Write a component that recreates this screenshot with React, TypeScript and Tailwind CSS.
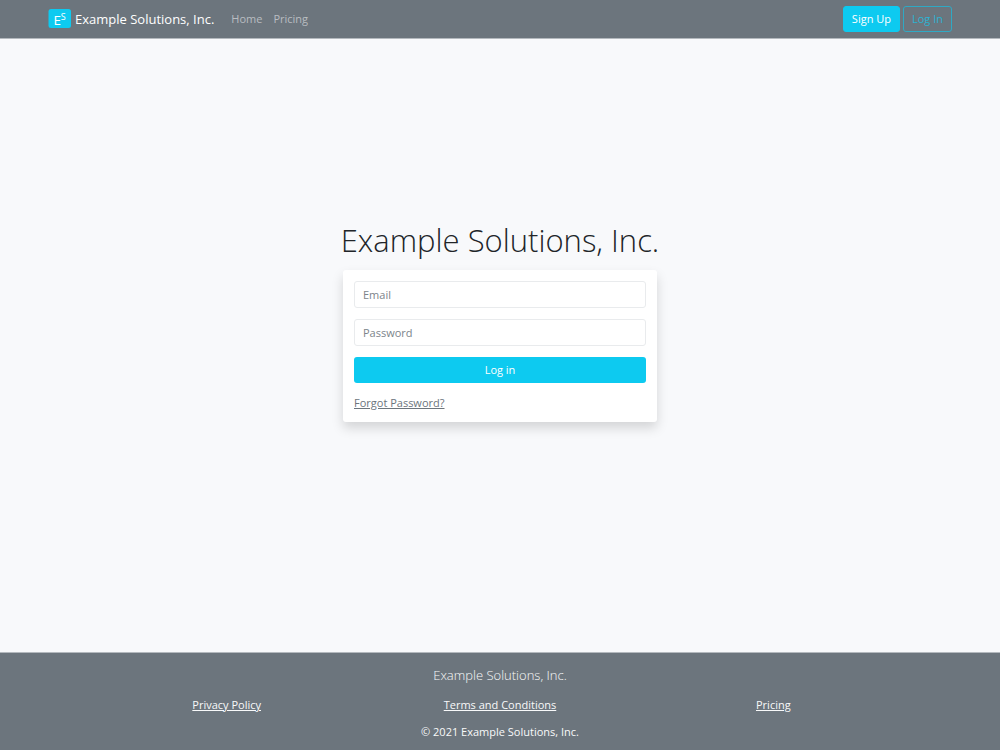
const COMPANY = "Example Solutions, Inc.";

const NAV_LINKS = [
  { label: "Home", href: "#home" },
  { label: "Pricing", href: "#pricing" },
] as const;

const FOOTER_LINKS = [
  { label: "Privacy Policy", href: "#privacy" },
  { label: "Terms and Conditions", href: "#terms" },
  { label: "Pricing", href: "#pricing" },
] as const;

const FIELDS = [
  { name: "email", type: "email", label: "Email" },
  { name: "password", type: "password", label: "Password" },
] as const;

function LogoMark() {
  return (
    <svg width="23" height="20" viewBox="0 0 23 20" aria-hidden="true">
      <rect x="0.5" width="22.5" height="19" rx="2.5" fill="#0dcaf0" />
      <text x="5.5" y="15.5" fontSize="13.5" fill="#fff">
        E
      </text>
      <text x="12.8" y="10.5" fontSize="9" fill="#fff">
        S
      </text>
    </svg>
  );
}

export default function App() {
  return (
    <div className="flex min-h-screen flex-col bg-[#f8f9fb] font-['Open_Sans','Noto_Sans',sans-serif] text-[11px] leading-4 text-[#212529]">
      {/* Navbar */}
      <header className="border-b border-[#b4b9be] bg-[#6c757d]">
        <nav className="flex h-[38px] items-center justify-between px-12">
          <div className="flex items-center">
            <a href="#home" className="mr-[17px] flex items-center gap-1 text-[13px] leading-5 text-white">
              <LogoMark />
              {COMPANY}
            </a>
            <div className="flex gap-[11px] text-[#b9bdc1]">
              {NAV_LINKS.map((link) => (
                <a key={link.label} href={link.href} className="hover:text-white">
                  {link.label}
                </a>
              ))}
            </div>
          </div>
          <div className="flex gap-[3px]">
            <button
              type="button"
              className="h-[26px] rounded-[3px] border border-[#0dcaf0] bg-[#0dcaf0] px-2 text-white"
            >
              Sign Up
            </button>
            <button
              type="button"
              className="h-[26px] rounded-[3px] border border-[#2fa9c4] px-2 text-[#2bb3d2]"
            >
              Log In
            </button>
          </div>
        </nav>
      </header>

      {/* Login form */}
      <main className="flex flex-1 flex-col items-center justify-center pb-[50px]">
        <h1 className="mb-2.5 text-center text-[31px] leading-10 font-light whitespace-nowrap">
          {COMPANY}
        </h1>
        <form
          className="flex w-[314px] flex-col gap-[11px] rounded-[3px] bg-white p-[11px] shadow-[0_6px_12px_rgba(0,0,0,0.15)]"
          onSubmit={(event) => event.preventDefault()}
        >
          {FIELDS.map((field) => (
            <input
              key={field.name}
              type={field.type}
              name={field.name}
              aria-label={field.label}
              placeholder={field.label}
              className="h-[27px] w-full rounded-[3px] border border-[#e9ebed] px-2 outline-none placeholder:text-[#7c848b] focus:border-[#0dcaf0]"
            />
          ))}
          <button type="submit" className="h-[26px] w-full rounded-[3px] bg-[#0dcaf0] text-white">
            Log in
          </button>
          <a href="#forgot" className="w-fit pt-px text-[#6c757d] underline">
            Forgot Password?
          </a>
        </form>
      </main>

      {/* Footer */}
      <footer className="border-t border-[#b4b9be] bg-[#6c757d] px-[90px] pt-3 pb-2.5 text-center text-[#f8f9fa]">
        <p className="text-[13px] leading-5 font-light">{COMPANY}</p>
        <div className="mt-3 grid grid-cols-3">
          {FOOTER_LINKS.map((link) => (
            <div key={link.label}>
              <a href={link.href} className="underline">
                {link.label}
              </a>
            </div>
          ))}
        </div>
        <p className="mt-[11px]">© 2021 {COMPANY}</p>
      </footer>
    </div>
  );
}
